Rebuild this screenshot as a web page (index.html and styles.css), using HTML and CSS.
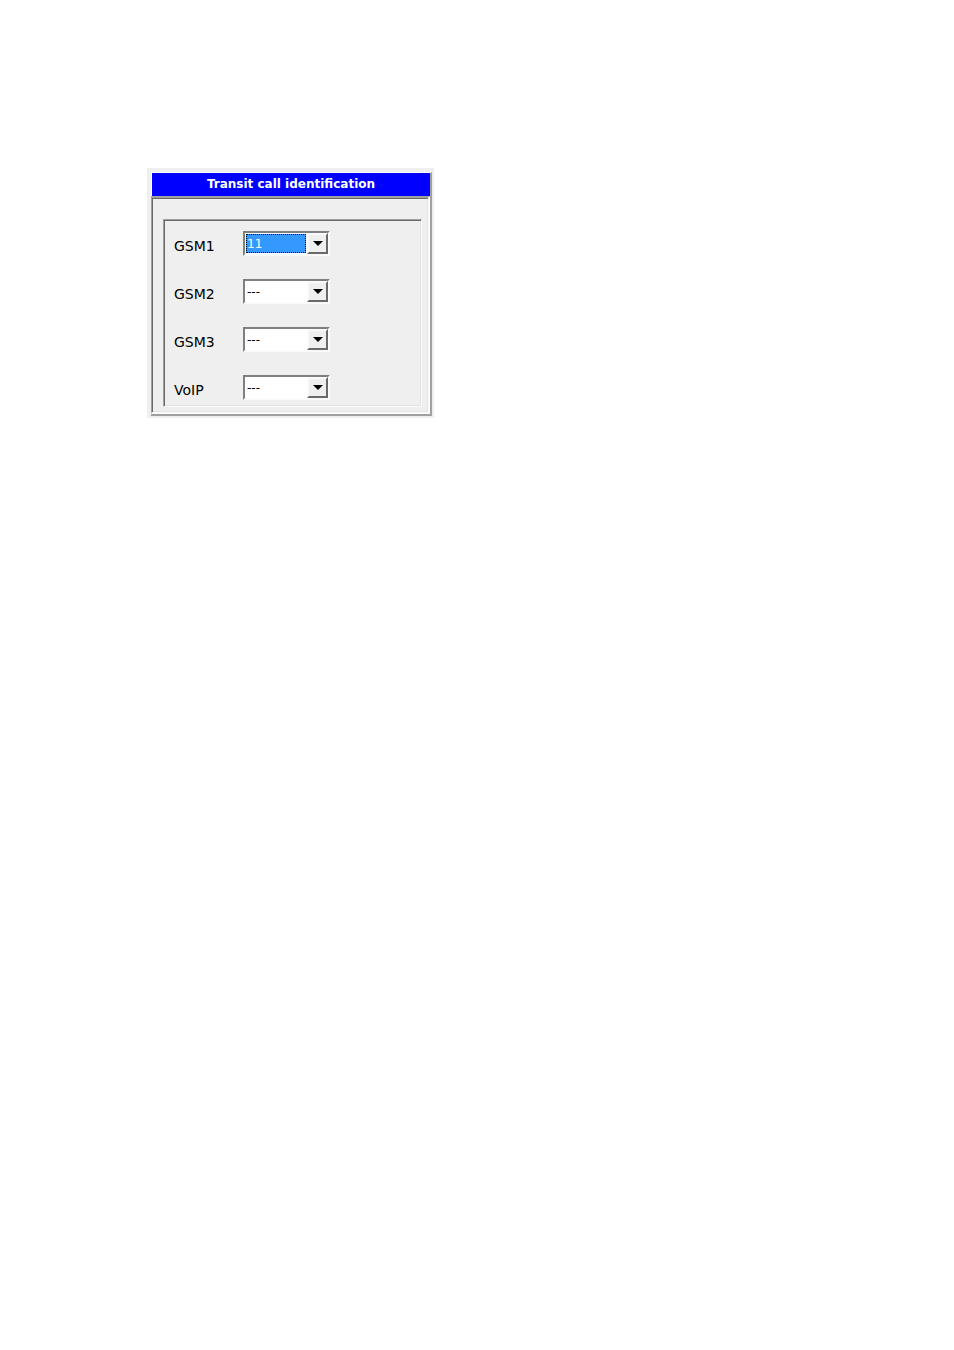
FILE: index.html
```html
<!DOCTYPE html>
<html lang="en">
  <head>
    <meta charset="UTF-8" />
    <meta name="viewport" content="width=device-width, initial-scale=1.0" />
    <title>Transit call identification</title>
    <link rel="stylesheet" href="styles.css">
  </head>
  <body>
    <main class="window">
      <div class="frame">
        <h1 class="title">Transit call identification</h1>
        <form class="panel">
          <div class="group">
            <div class="row">
              <label for="gsm1">GSM1</label>
              <div class="combo">
                <select id="gsm1" class="active">
                  <option>---</option>
                  <option selected>11</option>
                </select>
                <span class="arrow"><svg width="10" height="5" viewBox="0 0 10 5"><path d="M0 0h10L5 5z" /></svg></span>
              </div>
            </div>
            <div class="row">
              <label for="gsm2">GSM2</label>
              <div class="combo">
                <select id="gsm2">
                  <option selected>---</option>
                  <option>11</option>
                </select>
                <span class="arrow"><svg width="10" height="5" viewBox="0 0 10 5"><path d="M0 0h10L5 5z" /></svg></span>
              </div>
            </div>
            <div class="row">
              <label for="gsm3">GSM3</label>
              <div class="combo">
                <select id="gsm3">
                  <option selected>---</option>
                  <option>11</option>
                </select>
                <span class="arrow"><svg width="10" height="5" viewBox="0 0 10 5"><path d="M0 0h10L5 5z" /></svg></span>
              </div>
            </div>
            <div class="row">
              <label for="voip">VoIP</label>
              <div class="combo">
                <select id="voip">
                  <option selected>---</option>
                  <option>11</option>
                </select>
                <span class="arrow"><svg width="10" height="5" viewBox="0 0 10 5"><path d="M0 0h10L5 5z" /></svg></span>
              </div>
            </div>
          </div>
        </form>
      </div>
    </main>
  </body>
</html>
```
FILE: styles.css
```css
* {
  margin: 0;
  padding: 0;
  box-sizing: border-box;
}

body {
  padding: 168px 147px;
  background: #fff;
  color: #000;
  font-family: "DejaVu Sans", sans-serif;
  font-size: 14px;
}

.window {
  width: 287px;
  max-width: 100%;
  padding: 4px 2px 2px 4px;
  background: #efefef;
}

/* raised edge */
.frame {
  border-top: 1px solid #fff;
  border-right: 2px solid #a0a0a0;
  border-bottom: 2px solid #a0a0a0;
}

.title {
  height: 23px;
  border-left: 1px solid #fff;
  background: #0000ff;
  color: #fff;
  font-size: 12px;
  font-weight: bold;
  line-height: 23px;
  text-align: center;
}

/* sunken edges: a light outer line and a dark inner one */
.panel,
.group {
  border: 1px solid #a0a0a0;
  border-right-color: #fafafa;
  border-bottom-color: #fafafa;
  box-shadow: inset 1px 1px #696969, inset -1px -1px #e3e3e3;
}

.panel {
  border-top-width: 2px;
  border-right-width: 2px;
  border-bottom-width: 2px;
  padding: 21px 6px 5px 11px;
}

.group {
  display: flex;
  flex-direction: column;
  gap: 23px;
  padding: 11px 10px 6px;
}

.row {
  display: flex;
  align-items: center;
}

.row label {
  width: 69px;
  padding-top: 5px;
  line-height: 20px;
}

.combo {
  display: flex;
  width: 87px;
  height: 25px;
  border: 2px solid #808080;
  border-right-color: #fafafa;
  border-bottom-color: #fafafa;
  background: #fff;
}

.combo select {
  flex: 1;
  min-width: 0;
  margin: 1px;
  padding-left: 1px;
  border: 0;
  background: #fff;
  color: #000;
  font-family: inherit;
  font-size: 12px;
  appearance: none;
  outline: none;
}

.combo .active {
  padding-left: 0;
  border: 1px dotted #000;
  background: #3399ff;
  color: #fff;
}

.arrow {
  display: flex;
  align-items: center;
  justify-content: center;
  width: 21px;
  border: 2px solid #696969;
  border-top-color: #fafafa;
  border-left-color: #fafafa;
  background: #efefef;
  pointer-events: none;
}
```
